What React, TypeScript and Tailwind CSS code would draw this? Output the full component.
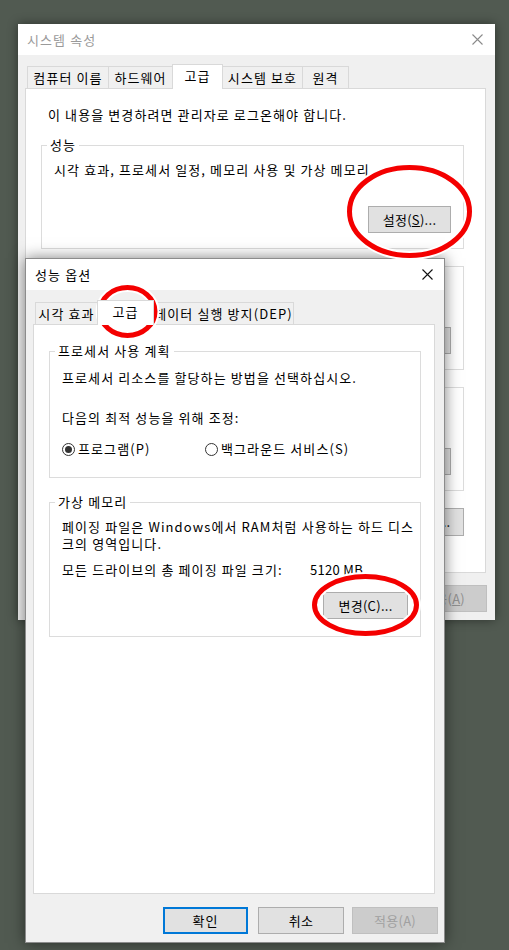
import React from "react";

const CloseIcon = ({ color }: { color: string }) => (
  <svg width="11" height="11" viewBox="0 0 11 11" aria-hidden>
    <path d="M0.5 0.5 L10.5 10.5 M10.5 0.5 L0.5 10.5" stroke={color} strokeWidth="1.1" fill="none" />
  </svg>
);

type TabProps = { label: string; width: string; active?: boolean; first?: boolean };

const Tab = ({ label, width, active, first }: TabProps) => (
  <div
    className={[
      "flex items-center justify-center border border-b-0 border-[#d9d9d9] whitespace-nowrap",
      width,
      first ? "" : "-ml-px",
      active ? "relative z-10 h-[25px] -mb-px bg-white pb-[3px]" : "h-[22px] bg-[#f0f0f0]",
    ].join(" ")}
  >
    {label}
  </div>
);

const GroupBox = ({
  legend,
  className,
  children,
}: {
  legend: string;
  className: string;
  children: React.ReactNode;
}) => (
  <fieldset className={`min-w-0 border border-[#dcdcdc] ${className}`}>
    <legend className="ml-[5px] px-[3px] leading-[16px]">{legend}</legend>
    {children}
  </fieldset>
);

const Button = ({
  children,
  className = "",
}: {
  children: React.ReactNode;
  className?: string;
}) => (
  <div
    className={`flex h-[27px] items-center justify-center border border-[#adadad] bg-[#e1e1e1] whitespace-nowrap tracking-[0.3px] ${className}`}
  >
    {children}
  </div>
);

const Radio = ({ checked, label, className = "" }: { checked?: boolean; label: string; className?: string }) => (
  <div className={`flex items-center ${className}`}>
    <div className="flex h-[13px] w-[13px] items-center justify-center rounded-full border border-[#333333] bg-white">
      {checked && <div className="h-[7px] w-[7px] rounded-full bg-[#333333]" />}
    </div>
    <span className="ml-[3px]">{label}</span>
  </div>
);

const SystemWindow = () => (
  <div className="absolute left-[18px] top-[24px] flex h-[596px] w-[477px] flex-col bg-[#f0f0f0] shadow-[0_0_10px_rgba(0,0,0,0.45)]">
    <div className="flex h-[31px] items-center justify-between bg-white pl-[9px] pr-[12px] text-[#9a9a9a]">
      <span>시스템 속성</span>
      <CloseIcon color="#8a8a8a" />
    </div>
    <div className="flex flex-1 flex-col pl-[7px] pr-[8px] pt-[9px]">
      <div className="flex h-[24px] items-end pl-[2px]">
        <Tab label="컴퓨터 이름" width="w-[82px]" first />
        <Tab label="하드웨어" width="w-[65px]" />
        <Tab label="고급" width="w-[51px]" active />
        <Tab label="시스템 보호" width="w-[81px]" />
        <Tab label="원격" width="w-[47px]" />
      </div>
      <div className="mr-[1px] flex h-[485px] flex-col border border-[#d9d9d9] bg-white pl-[15px] pr-[21px] pt-[18px]">
        <p className="ml-[7px] leading-[16px]">이 내용을 변경하려면 관리자로 로그온해야 합니다.</p>
        <GroupBox legend="성능" className="mt-[14px] h-[112px]">
          <div className="flex flex-col px-[12px] pt-[9px]">
            <p className="leading-[16px]">시각 효과, 프로세서 일정, 메모리 사용 및 가상 메모리</p>
            <Button className="mt-[28px] w-[83px] self-end">
              설정(<span className="underline">S</span>)...
            </Button>
          </div>
        </GroupBox>
        <GroupBox legend="사용자 프로필" className="mt-[9px] h-[112px]">
          <div className="flex flex-col px-[12px] pt-[9px]">
            <p className="leading-[16px]">사용자 로그인에 관련된 바탕 화면 설정</p>
            <Button className="mt-[28px] w-[83px] self-end">설정(E)...</Button>
          </div>
        </GroupBox>
        <GroupBox legend="시작 및 복구" className="mt-[9px] h-[112px]">
          <div className="flex flex-col px-[12px] pt-[9px]">
            <p className="leading-[16px]">시스템 시작, 시스템 오류 및 디버깅 정보</p>
            <Button className="mt-[28px] w-[83px] self-end">설정(T)...</Button>
          </div>
        </GroupBox>
        <Button className="mt-[17px] h-[28px] w-[110px] self-end">환경 변수(N)...</Button>
      </div>
      <div className="mt-[12px] flex justify-end gap-[9px]">
        <Button className="w-[86px]">확인</Button>
        <Button className="w-[86px]">취소</Button>
        <div className="flex h-[27px] w-[86px] items-center justify-center border border-[#bfbfbf] bg-[#cccccc] tracking-[0.3px] text-[#8f8f8f]">
          적용(<span className="underline">A</span>)
        </div>
      </div>
    </div>
  </div>
);

const PerformanceDialog = () => (
  <div className="absolute left-[25px] top-[258px] flex h-[685px] w-[420px] flex-col border border-[#8c8c8c] bg-[#f0f0f0] shadow-[0_0_14px_rgba(0,0,0,0.5)]">
    <div className="flex h-[31px] items-center justify-between bg-white pl-[9px] pr-[11px]">
      <span>성능 옵션</span>
      <CloseIcon color="#111111" />
    </div>
    <div className="flex flex-1 flex-col pl-[7px] pr-[6px] pt-[9px]">
      <div className="flex h-[25px] items-end pl-[2px]">
        <Tab label="시각 효과" width="w-[63px]" first />
        <Tab label="고급" width="w-[57px]" active />
        <Tab label="데이터 실행 방지(DEP)" width="w-[141px]" />
      </div>
      <div className="mr-[3px] flex h-[570px] flex-col border border-[#d9d9d9] bg-white pl-[15px] pr-[13px] pt-[18px]">
        <GroupBox legend="프로세서 사용 계획" className="h-[135px]">
          <div className="flex flex-col pl-[12px] pt-[11px] leading-[16px]">
            <p>프로세서 리소스를 할당하는 방법을 선택하십시오.</p>
            <p className="mt-[24px]">다음의 최적 성능을 위해 조정:</p>
            <div className="mt-[15px] flex">
              <Radio checked label="프로그램(P)" className="w-[143px]" />
              <Radio label="백그라운드 서비스(S)" />
            </div>
          </div>
        </GroupBox>
        <GroupBox legend="가상 메모리" className="mt-[16px] h-[143px]">
          <div className="flex flex-col px-[12px] pt-[8px]">
            <p className="whitespace-nowrap leading-[17px]">
              페이징 파일은 Windows에서 RAM처럼 사용하는 하드 디스
              <br />
              크의 영역입니다.
            </p>
            <div className="mt-[10px] flex leading-[16px]">
              <span className="w-[248px]">모든 드라이브의 총 페이징 파일 크기:</span>
              <span className="tracking-[0.3px]">5120 MB</span>
            </div>
            <Button className="mt-[14px] w-[85px] self-end">변경(C)...</Button>
          </div>
        </GroupBox>
      </div>
      <div className="mt-[13px] flex justify-end">
        <div className="flex h-[27px] w-[85px] items-center justify-center border-2 border-[#0078d7] bg-[#e1e1e1]">
          확인
        </div>
        <Button className="ml-[10px] w-[86px]">취소</Button>
        <div className="ml-[8px] flex h-[27px] w-[86px] items-center justify-center border border-[#bfbfbf] bg-[#cccccc] tracking-[0.3px] text-[#a0a0a0]">
          적용(A)
        </div>
      </div>
    </div>
  </div>
);

const Marks = () => (
  <svg className="pointer-events-none absolute inset-0" width="509" height="950" aria-hidden>
    {[
      { cx: 409.5, cy: 211.5, rx: 60, ry: 44 },
      { cx: 127.5, cy: 311.5, rx: 27.5, ry: 24 },
      { cx: 365.5, cy: 605, rx: 51, ry: 28.5 },
    ].map((e, i) => (
      <g key={i}>
        <ellipse {...e} fill="none" stroke="#ffffff" strokeWidth="9" />
        <ellipse {...e} fill="none" stroke="#f40000" strokeWidth="5" />
      </g>
    ))}
  </svg>
);

export default function App() {
  return (
    <div className="relative h-[950px] w-[509px] overflow-hidden bg-[#515a51] font-['Noto_Sans_CJK_KR',sans-serif] text-[13px] tracking-[1.1px] text-black">
      <SystemWindow />
      <PerformanceDialog />
      <Marks />
    </div>
  );
}
